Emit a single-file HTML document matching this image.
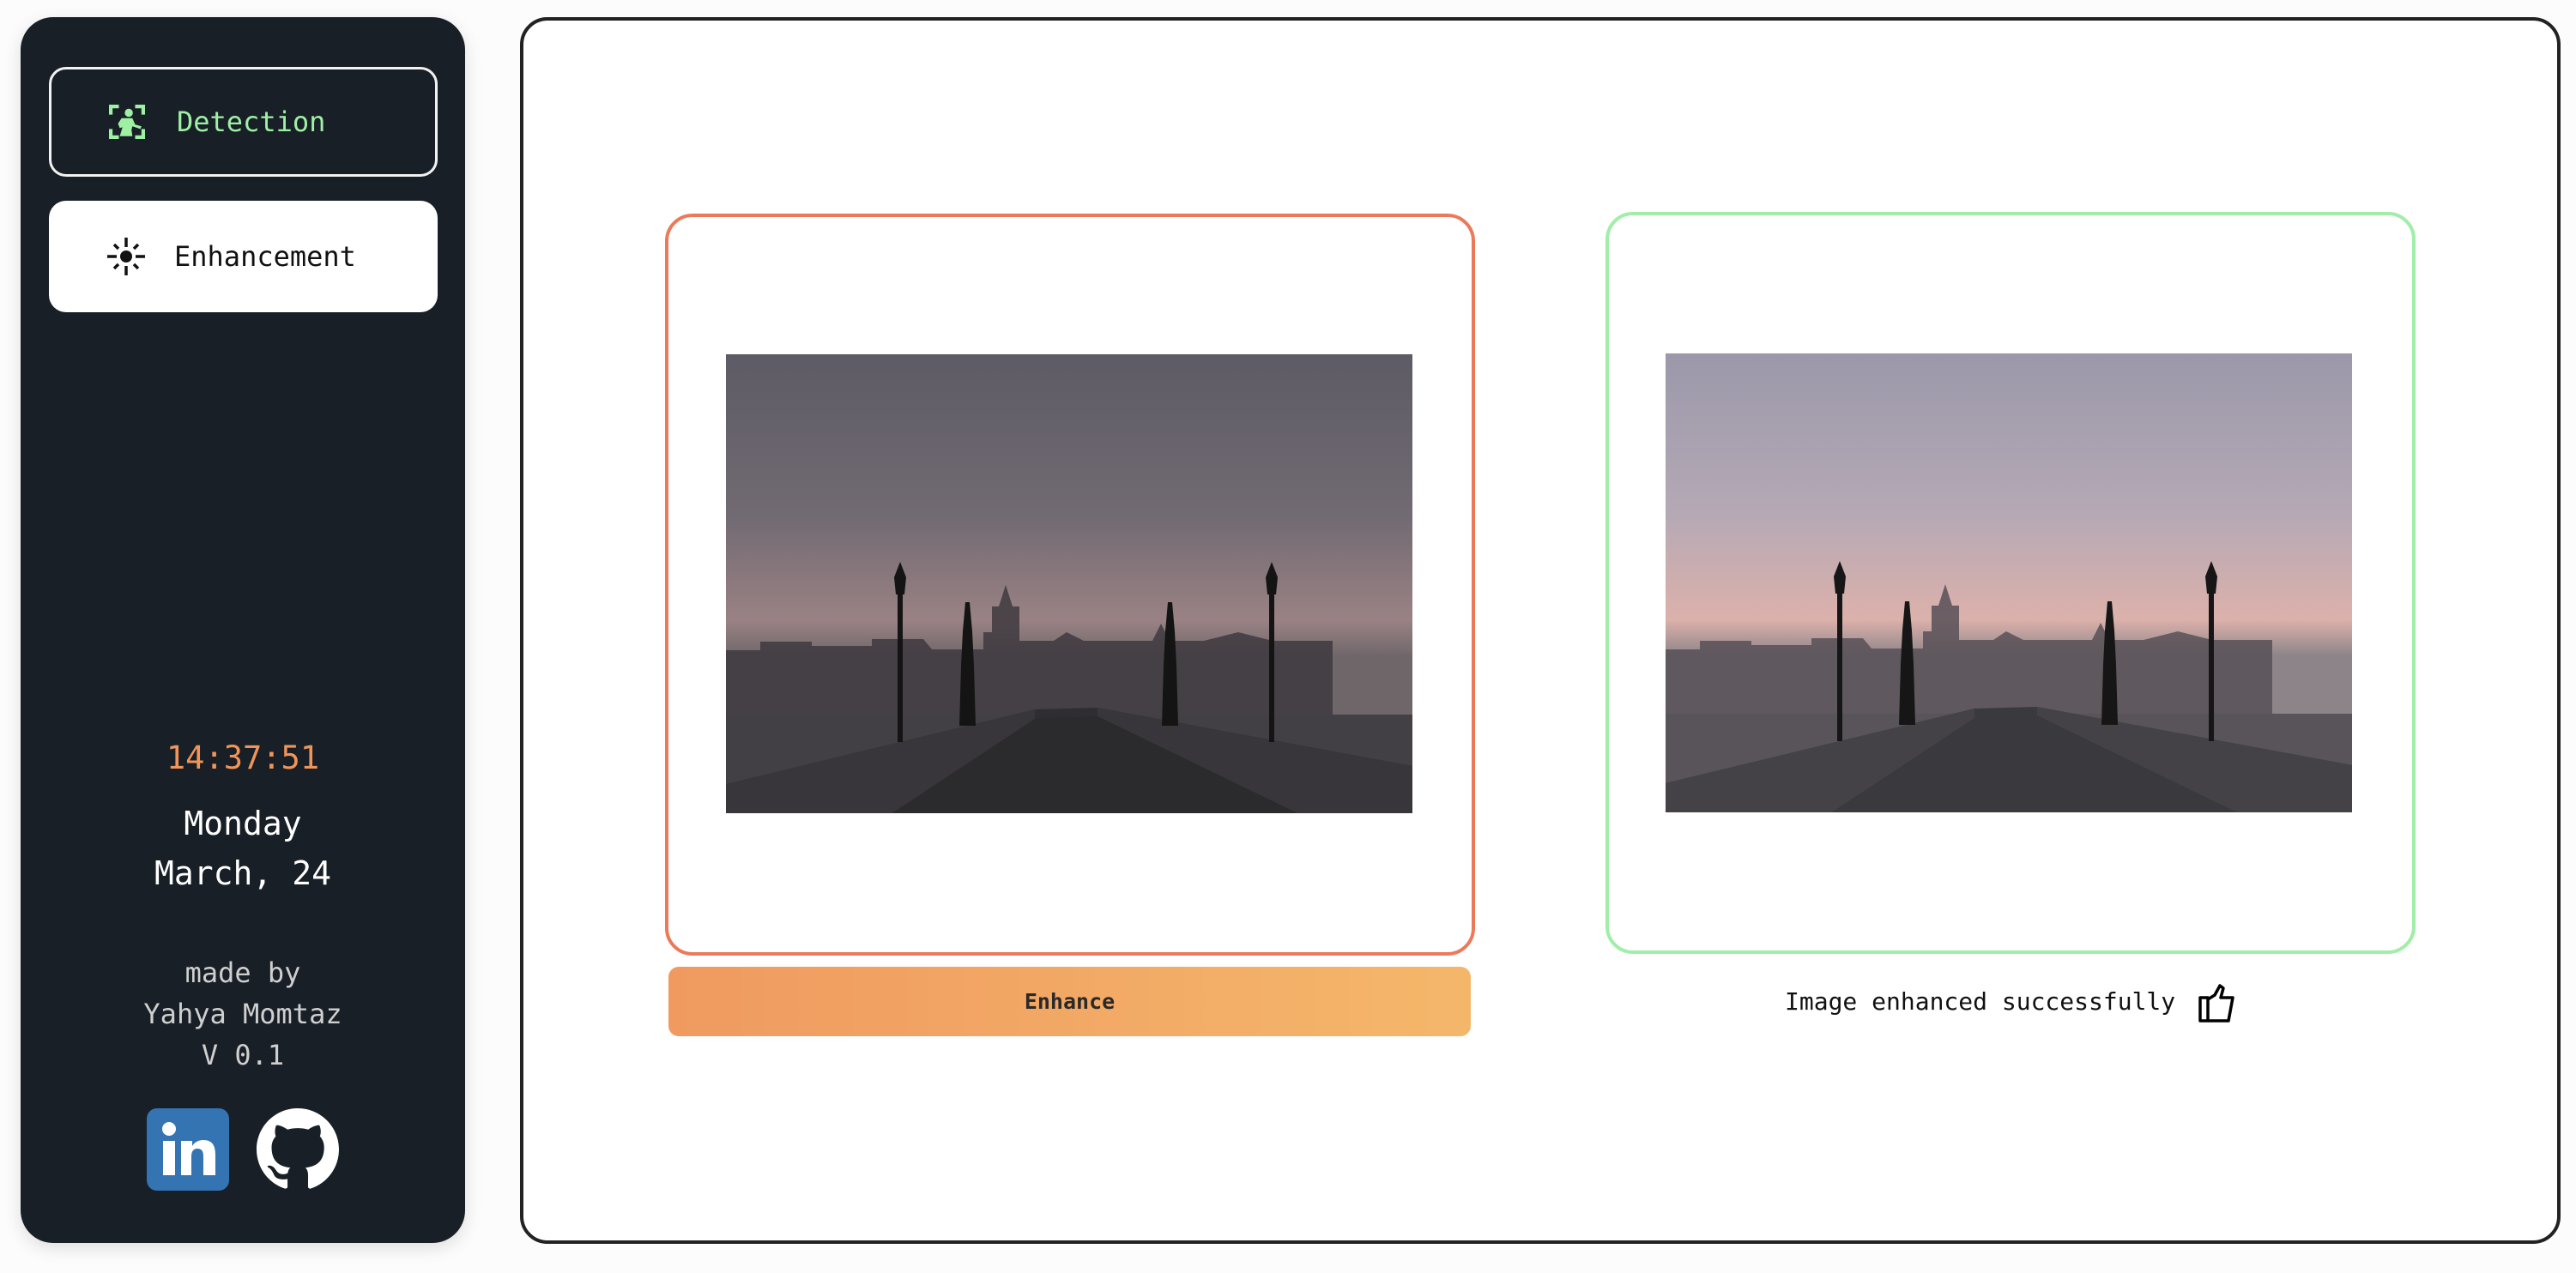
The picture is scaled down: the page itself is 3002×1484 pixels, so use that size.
<!DOCTYPE html>
<html><head><meta charset="utf-8">
<style>
*{margin:0;padding:0;box-sizing:border-box}
html,body{width:3002px;height:1484px;background:#fcfcfc;overflow:hidden;font-family:"DejaVu Sans Mono","Liberation Mono",monospace}
.side{position:absolute;left:24px;top:20px;width:518px;height:1429px;background:#181f26;border-radius:38px;box-shadow:0 6px 20px rgba(0,0,0,.12)}
.btn{position:absolute;left:33px;width:453px;border-radius:20px;display:flex;align-items:center;font-size:32px}
.b1{top:58px;height:128px;border:3px solid #f2f2f2;color:#9ef0a4}
.b2{top:214px;height:130px;background:#fff;color:#111}
.btn svg{position:absolute}
.btn span{position:absolute;left:146px}
.c{position:absolute;left:0;width:518px;text-align:center}
.main{position:absolute;left:606px;top:20px;width:2378px;height:1430px;border:4px solid #222;border-radius:32px;background:#fff}
.card{position:absolute;width:944px;height:865px;border:4px solid;border-radius:32px;background:#fff}
.img{position:absolute;width:800px;height:535px}
</style></head><body>
<div class="side">
  <div class="btn b1">
    <svg width="42" height="42" viewBox="0 0 40 40" fill="none" style="left:67px">
      <path d="M2 12V3h9M29 3h9v9M38 28v9h-9M11 37H2v-9" stroke="#9ef0a4" stroke-width="4"/>
      <circle cx="22" cy="10" r="4.5" fill="#9ef0a4"/>
      <path d="M10 22l4-6h12l3 7 7 2-1 3-9-3-1 4 1 7H12l3-10-3 1z" fill="#9ef0a4"/>
    </svg>
    <span>Detection</span>
  </div>
  <div class="btn b2">
    <svg width="44" height="44" viewBox="0 0 44 44" style="left:68px">
      <circle cx="22" cy="22" r="7" fill="#111"/>
      <path d="M22 0v11M22 33v11M0 22h11M33 22h11" stroke="#111" stroke-width="3.5"/>
      <path d="M8 8l5 5M36 8l-5 5M8 36l5-5M36 36l-5-5" stroke="#111" stroke-width="3.5"/>
    </svg>
    <span>Enhancement</span>
  </div>
  <div class="c" style="top:842px;font-size:37px;color:#f0955a;line-height:44px">14:37:51</div>
  <div class="c" style="top:911px;font-size:38px;color:#fff;line-height:58px">Monday<br>March, 24</div>
  <div class="c" style="top:1090px;font-size:32px;color:#cfcfcf;line-height:48px">made by<br>Yahya Momtaz<br>V 0.1</div>
  <svg style="position:absolute;left:147px;top:1272px" width="96" height="96" viewBox="0 0 96 96">
    <rect width="96" height="96" rx="12" fill="#3474b2"/>
    <rect x="19" y="38" width="14" height="40" fill="#fff"/>
    <circle cx="26" cy="24" r="8" fill="#fff"/>
    <path d="M40 38h13v6c3-5 8-7 13-7 10 0 14 6 14 17v24H66V56c0-6-2-9-7-9s-7 4-7 9v22H40z" fill="#fff"/>
  </svg>
  <svg style="position:absolute;left:275px;top:1272px" width="96" height="96" viewBox="0 0 16 16">
    <path fill="#fff" d="M8 0C3.58 0 0 3.58 0 8c0 3.54 2.290 6.53 5.47 7.59.4.07.55-.17.55-.38 0-.19-.01-.82-.01-1.49-2.01.37-2.530-.49-2.690-.94-.09-.23-.48-.94-.82-1.13-.28-.15-.68-.52-.01-.53.63-.01 1.08.58 1.23.82.72 1.21 1.87.87 2.33.66.07-.52.28-.87.51-1.07-1.78-.2-3.64-.89-3.64-3.95 0-.87.31-1.590.82-2.150-.08-.2-.36-1.02.08-2.12 0 0 .67-.21 2.2.82.64-.18 1.32-.27 2-.27.68 0 1.36.09 2 .27 1.53-1.04 2.2-.82 2.2-.82.44 1.1.16 1.92.08 2.12.51.56.82 1.27.82 2.15 0 3.07-1.87 3.75-3.65 3.95.29.25.54.73.54 1.48 0 1.07-.01 1.93-.01 2.2 0 .21.15.46.55.38A8.013 8.013 0 0016 8c0-4.42-3.58-8-8-8z"/>
  </svg>
</div>

<div class="main"></div>

<div class="card" style="left:775px;top:249px;border-color:#ec7a5a"></div>
<div class="card" style="left:1871px;top:247px;border-color:#a0eea8"></div>

<svg class="img" style="left:846px;top:413px" viewBox="0 0 800 535" preserveAspectRatio="none">
  <defs>
    <linearGradient id="s1" x1="0" y1="0" x2="0" y2="1">
      <stop offset="0" stop-color="#5d5b65"/><stop offset=".35" stop-color="#716a72"/>
      <stop offset=".58" stop-color="#9a8284"/><stop offset=".66" stop-color="#6e6669"/><stop offset="1" stop-color="#6e6669"/>
    </linearGradient>
  </defs>
  <rect width="800" height="535" fill="url(#s1)"/>
  <path d="M0 345h40v-10h60v5h70v-8h60l10 12h60v-20h10v-30h8l8 -25 8 25h8v40h40l15-10 20 10h80l10-20 10 20h40l40-10 40 10h70v120H0z" fill="#3e3a40" opacity=".85"/>
  <path d="M0 420h800v115H0z" fill="#434045"/>
  <path d="M0 501L360 414 433 412 800 480V535H0z" fill="#2e2d31"/>
  <path d="M0 501L360 414 360 425 0 663z" fill="#38363a"/>
  <path d="M800 480L433 412 433 422 800 600z" fill="#38363a"/>
  <path d="M0 663L360 425 433 422 800 600V535H0z" fill="#2b2a2d"/>
  <g fill="#141414">
    <rect x="200" y="262" width="6" height="190"/><path d="M196 260l7-18 7 18-2 20h-10z"/>
    <rect x="633" y="262" width="6" height="190"/><path d="M629 260l7-18 7 18-2 20h-10z"/>
    <path d="M272 433l2-70 2-40 3-34 5 0 3 34 2 40 2 70z"/>
    <path d="M508 433l2-70 2-40 3-34 5 0 3 34 2 40 2 70z"/>
  </g>
</svg>

<svg class="img" style="left:1941px;top:412px" viewBox="0 0 800 535" preserveAspectRatio="none">
  <defs>
    <linearGradient id="s2" x1="0" y1="0" x2="0" y2="1">
      <stop offset="0" stop-color="#9b98aa"/><stop offset=".35" stop-color="#b5a9b5"/>
      <stop offset=".58" stop-color="#dcb1ab"/><stop offset=".66" stop-color="#8c8488"/><stop offset="1" stop-color="#8c8488"/>
    </linearGradient>
  </defs>
  <rect width="800" height="535" fill="url(#s2)"/>
  <path d="M0 345h40v-10h60v5h70v-8h60l10 12h60v-20h10v-30h8l8 -25 8 25h8v40h40l15-10 20 10h80l10-20 10 20h40l40-10 40 10h70v120H0z" fill="#575057" opacity=".85"/>
  <path d="M0 420h800v115H0z" fill="#58545a"/>
  <path d="M0 501L360 414 433 412 800 480V535H0z" fill="#3a393d"/>
  <path d="M0 501L360 414 360 425 0 663z" fill="#444246"/>
  <path d="M800 480L433 412 433 422 800 600z" fill="#444246"/>
  <g fill="#161616">
    <rect x="200" y="262" width="6" height="190"/><path d="M196 260l7-18 7 18-2 20h-10z"/>
    <rect x="633" y="262" width="6" height="190"/><path d="M629 260l7-18 7 18-2 20h-10z"/>
    <path d="M272 433l2-70 2-40 3-34 5 0 3 34 2 40 2 70z"/>
    <path d="M508 433l2-70 2-40 3-34 5 0 3 34 2 40 2 70z"/>
  </g>
</svg>

<div style="position:absolute;left:779px;top:1127px;width:935px;height:81px;border-radius:12px;background:linear-gradient(90deg,#f09a60,#f4b76a);display:flex;align-items:center;justify-content:center;font-size:25px;font-weight:bold;color:#2a2a2a">Enhance</div>

<div style="position:absolute;left:2080px;top:1146px;font-size:28px;line-height:44px;color:#111;white-space:nowrap">Image enhanced successfully</div>
<svg style="position:absolute;left:2562px;top:1146px" width="44" height="46" viewBox="0 0 44 46" fill="none" stroke="#000" stroke-width="3.5" stroke-linejoin="round">
  <rect x="2" y="17" width="9" height="27"/>
  <path d="M11 19l8-5 6-11 4 3-3 11h14l-5 27H11"/>
</svg>
</body></html>
